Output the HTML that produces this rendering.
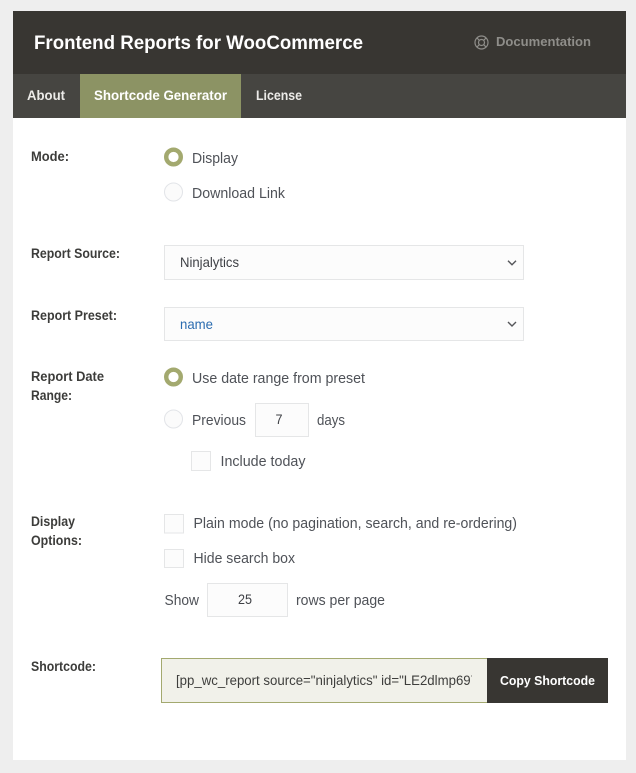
<!DOCTYPE html>
<html lang="en">
<head>
<meta charset="utf-8">
<title>Frontend Reports for WooCommerce</title>
<style>
html,body{margin:0;padding:0;width:636px;height:773px;overflow:hidden;background:#eeeeee}
svg{display:block}
text{font-family:"Liberation Sans",Arial,sans-serif}
.b{font-weight:700}
.l{font-weight:700;font-size:13.4px;fill:#3c3c3a}
.t{font-size:14.3px;fill:#4f5258}
.f{fill:#fcfcfc;stroke:#e5e6e7;stroke-width:1}
.v{font-size:13.8px;fill:#3e4045}
.r{fill:#fbfbfb;stroke:#e2e4e8;stroke-width:1}
</style>
</head>
<body>
<svg xmlns="http://www.w3.org/2000/svg" width="636" height="773" viewBox="0 0 636 773">
<defs><clipPath id="c"><rect x="170" y="660" width="302" height="40"/></clipPath></defs>
<rect width="636" height="773" fill="#eeeeee"/>
<rect x="13" y="11" width="613" height="749" fill="#ffffff"/>
<rect x="13" y="11" width="613" height="63" fill="#383632"/>
<rect x="13" y="74" width="613" height="44" fill="#464541"/>
<rect x="80" y="74" width="161" height="44" fill="#8c9364"/>

<text class="b" x="34" y="49" font-size="19" fill="#ffffff" textLength="329" lengthAdjust="spacingAndGlyphs">Frontend Reports for WooCommerce</text>
<g fill="none" stroke="#8f8e8a" stroke-width="1.2">
<circle cx="481.5" cy="42.5" r="6.5"/>
<circle cx="481.5" cy="42.5" r="3"/>
<path d="M477 38l2.4 2.4M486 38l-2.4 2.4M477 47l2.4-2.4M486 47l-2.4-2.4"/>
</g>
<text class="b" x="496" y="46" font-size="13" fill="#8f8e8a" textLength="95" lengthAdjust="spacingAndGlyphs">Documentation</text>

<text class="b" x="27" y="100" font-size="13.4" fill="#ecebe8" textLength="38" lengthAdjust="spacingAndGlyphs">About</text>
<text class="b" x="94" y="100" font-size="13.4" fill="#ffffff" textLength="133" lengthAdjust="spacingAndGlyphs">Shortcode Generator</text>
<text class="b" x="256" y="100" font-size="13.4" fill="#ecebe8" textLength="46" lengthAdjust="spacingAndGlyphs">License</text>

<text class="l" x="31" y="161" textLength="38" lengthAdjust="spacingAndGlyphs">Mode:</text>
<circle cx="173.5" cy="157" r="7.3" fill="#ffffff" stroke="#a3a96f" stroke-width="4.4"/>
<text class="t" x="192" y="163" textLength="46" lengthAdjust="spacingAndGlyphs">Display</text>
<circle class="r" cx="173.5" cy="192" r="9"/>
<text class="t" x="192" y="198" textLength="93" lengthAdjust="spacingAndGlyphs">Download Link</text>

<text class="l" x="31" y="258" textLength="89" lengthAdjust="spacingAndGlyphs">Report Source:</text>
<rect class="f" x="164.5" y="245.5" width="359" height="34"/>
<text class="v" x="180" y="267" textLength="59" lengthAdjust="spacingAndGlyphs">Ninjalytics</text>
<path d="M508 260.8l4 4 4-4" fill="none" stroke="#55565a" stroke-width="1.4"/>

<text class="l" x="31" y="320" textLength="86" lengthAdjust="spacingAndGlyphs">Report Preset:</text>
<rect class="f" x="164.5" y="307.5" width="359" height="33"/>
<text x="180" y="329" font-size="13.8" fill="#2b6cb0" textLength="33" lengthAdjust="spacingAndGlyphs">name</text>
<path d="M508 322l4 4 4-4" fill="none" stroke="#55565a" stroke-width="1.4"/>

<text class="l" x="31" y="381" textLength="73" lengthAdjust="spacingAndGlyphs">Report Date</text>
<text class="l" x="31" y="400" textLength="41" lengthAdjust="spacingAndGlyphs">Range:</text>
<circle cx="173.5" cy="377" r="7.3" fill="#ffffff" stroke="#a3a96f" stroke-width="4.4"/>
<text class="t" x="192" y="383" textLength="173" lengthAdjust="spacingAndGlyphs">Use date range from preset</text>
<circle class="r" cx="173.5" cy="419" r="9"/>
<text class="t" x="192" y="425" textLength="54" lengthAdjust="spacingAndGlyphs">Previous</text>
<rect class="f" x="255.5" y="403.5" width="53" height="33"/>
<text class="v" x="275.5" y="424" textLength="7" lengthAdjust="spacingAndGlyphs">7</text>
<text class="t" x="317" y="425" textLength="28" lengthAdjust="spacingAndGlyphs">days</text>
<rect class="f" x="191.5" y="451.5" width="19" height="19"/>
<text class="t" x="220.5" y="466" textLength="85" lengthAdjust="spacingAndGlyphs">Include today</text>

<text class="l" x="31" y="526" textLength="44" lengthAdjust="spacingAndGlyphs">Display</text>
<text class="l" x="31" y="545" textLength="51" lengthAdjust="spacingAndGlyphs">Options:</text>
<rect class="f" x="164.5" y="514.5" width="19" height="18.5"/>
<text class="t" x="193.5" y="528" textLength="323.5" lengthAdjust="spacingAndGlyphs">Plain mode (no pagination, search, and re-ordering)</text>
<rect class="f" x="164.5" y="549.5" width="19" height="18"/>
<text class="t" x="193.5" y="563" textLength="101.5" lengthAdjust="spacingAndGlyphs">Hide search box</text>
<text class="t" x="164.5" y="605" textLength="34.5" lengthAdjust="spacingAndGlyphs">Show</text>
<rect class="f" x="207.5" y="583.5" width="80" height="33"/>
<text class="v" x="238" y="604" textLength="14" lengthAdjust="spacingAndGlyphs">25</text>
<text class="t" x="296" y="605" textLength="89" lengthAdjust="spacingAndGlyphs">rows per page</text>

<text class="l" x="31" y="671" textLength="65" lengthAdjust="spacingAndGlyphs">Shortcode:</text>
<rect x="161.5" y="658.5" width="326" height="44" fill="#f1f1ea" stroke="#a3a96f" stroke-width="1"/>
<g clip-path="url(#c)"><text x="176" y="685" font-size="13.4" fill="#3e3e3c" textLength="302" lengthAdjust="spacingAndGlyphs">[pp_wc_report source="ninjalytics" id="LE2dlmp697</text></g>
<rect x="487" y="658" width="121" height="45" fill="#383632"/>
<text class="b" x="500" y="685" font-size="13" fill="#ffffff" textLength="95" lengthAdjust="spacingAndGlyphs">Copy Shortcode</text>
</svg>
</body>
</html>
